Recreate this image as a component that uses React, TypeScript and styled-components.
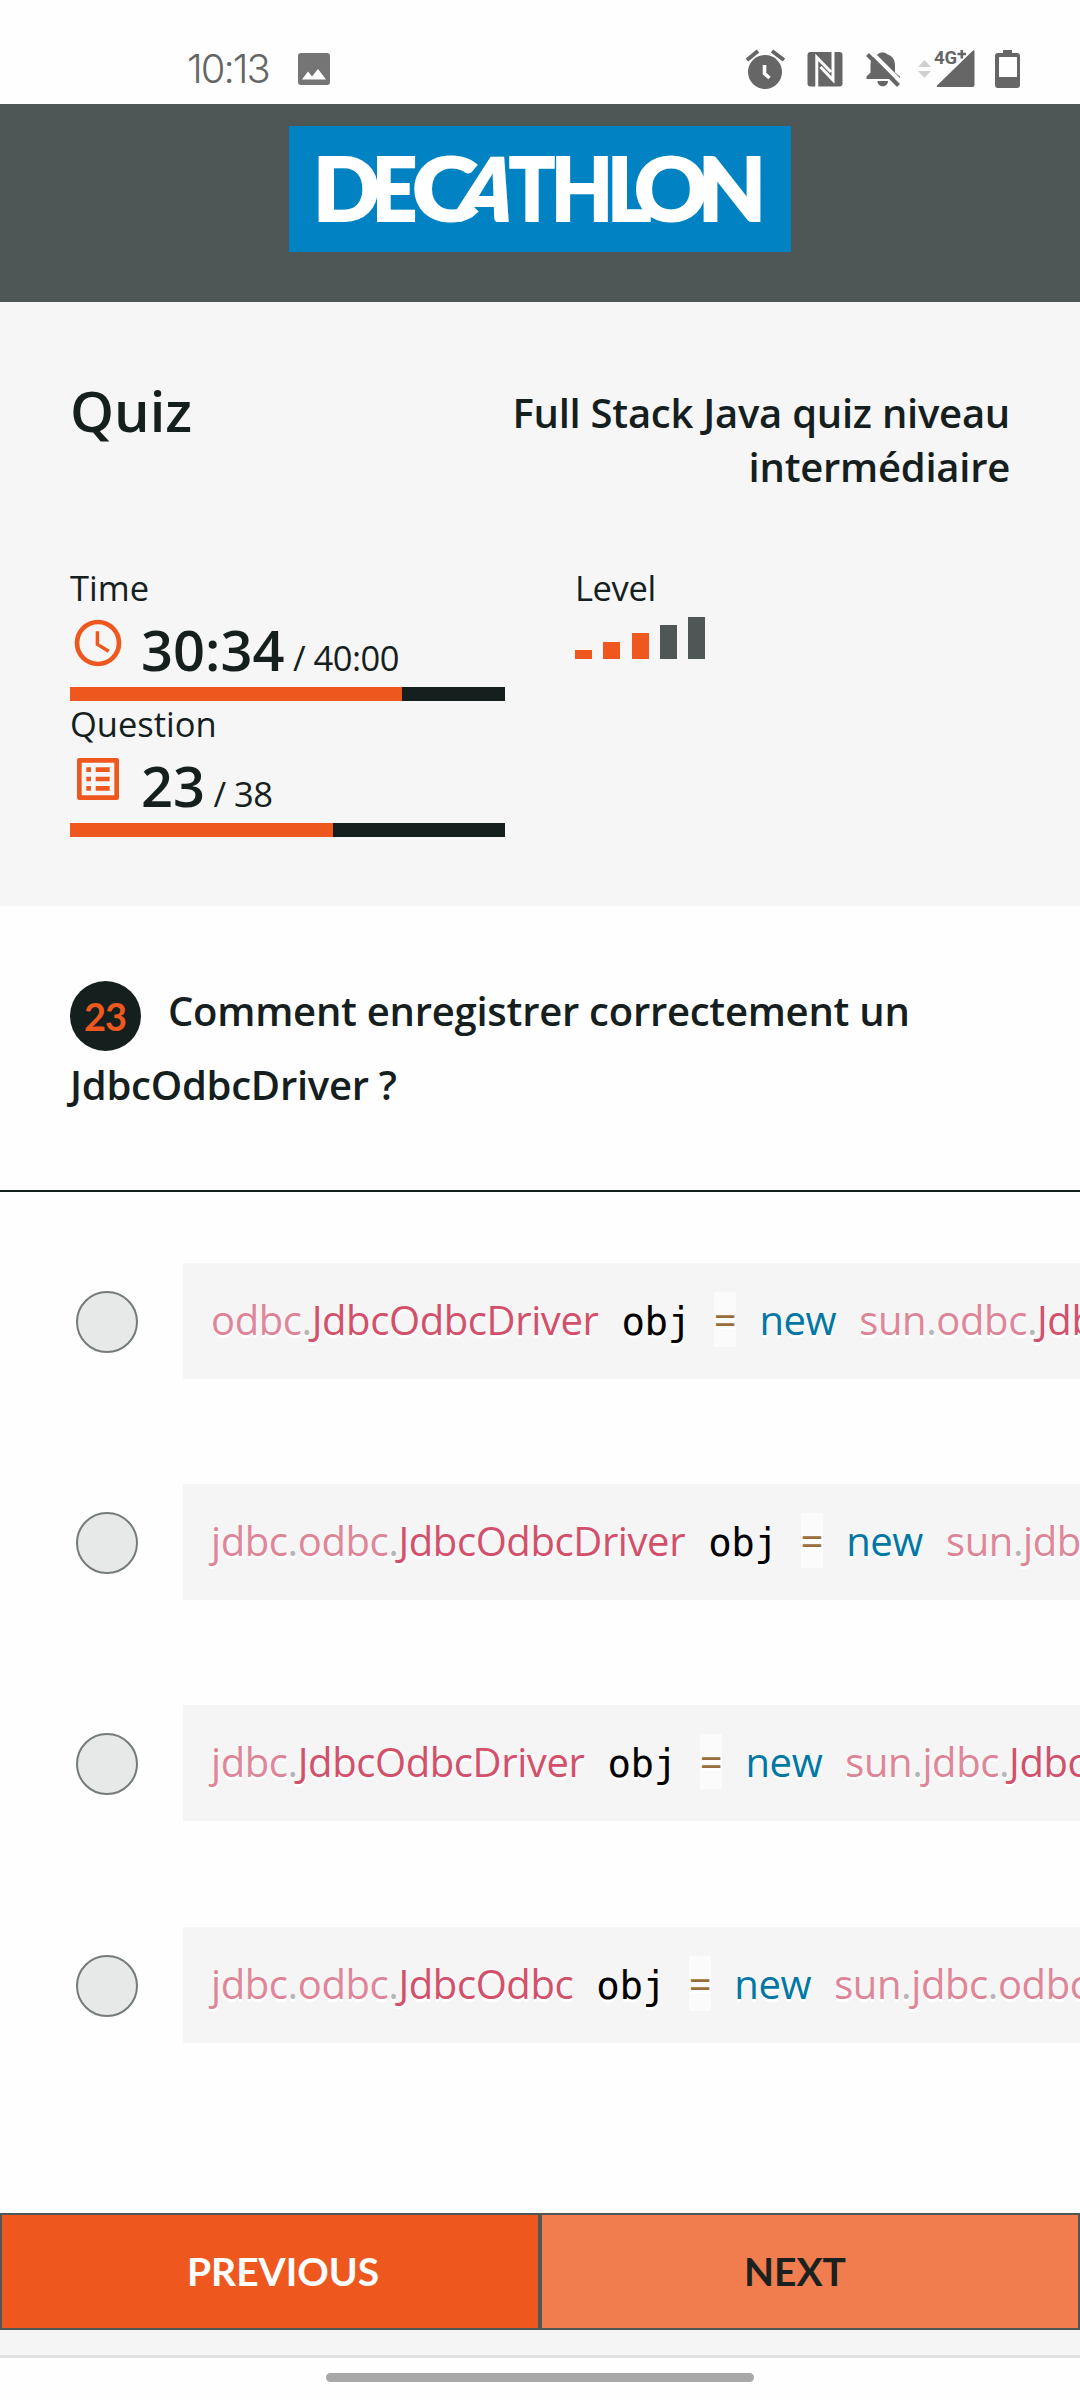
import React from "react";
import styled, { createGlobalStyle } from "styled-components";

const ink = "#15201e";
const slate = "#4e5755";
const orange = "#ee581f";
const statusGray = "#666666";

const GlobalStyle = createGlobalStyle`
  * { box-sizing: border-box; }
  body { margin: 0; background: #fff; }
`;

const Screen = styled.div`
  display: flex;
  flex-direction: column;
  width: 1080px;
  height: 2400px;
  overflow: hidden;
  background: #fefefe;
  color: ${ink};
  font-family: "Open Sans", "Noto Sans", sans-serif;
`;

const StatusBar = styled.div`
  display: flex;
  align-items: center;
  height: 104px;
  padding: 34px 60px 0 187px;
`;

const Clock = styled.span`
  width: 111px;
  font: 300 40px/48px Inter, "Liberation Sans", sans-serif;
  letter-spacing: -2px;
  color: ${statusGray};
`;

const StatusIcons = styled.div`
  display: flex;
  align-items: center;
  margin-left: auto;
`;

const StatusIcon = styled.svg<{ $gap?: number }>`
  display: block;
  overflow: visible;
  margin-left: ${(p) => p.$gap ?? 0}px;
`;

const Brand = styled.header`
  display: flex;
  justify-content: center;
  align-items: flex-start;
  height: 198px;
  padding-top: 22px;
  background: ${slate};
`;

const Summary = styled.section`
  height: 604px;
  padding: 84px 70px 0;
  background: #f6f6f6;
`;

const SummaryHead = styled.div`
  display: flex;
  justify-content: space-between;
  height: 181px;
`;

const Heading = styled.h1`
  margin: 0;
  font-size: 56px;
  font-weight: 600;
  line-height: 48px;
`;

const QuizName = styled.h2`
  width: 520px;
  margin: 0;
  font-size: 40px;
  font-weight: 600;
  line-height: 54px;
  letter-spacing: -0.25px;
  text-align: right;
`;

const Stats = styled.div`
  display: grid;
  grid-template-columns: 435px 435px;
  column-gap: 70px;
`;

const Stat = styled.div`
  height: 136px;
`;

const StatLabel = styled.div<{ $tight?: boolean }>`
  height: 48px;
  font-size: 34.5px;
  line-height: 41px;
  letter-spacing: ${(p) => (p.$tight ? -0.4 : 0)}px;
`;

const StatValue = styled.div`
  display: flex;
  height: 72px;
`;

const StatIcon = styled.svg`
  display: block;
  margin-right: 15px;
  fill: ${orange};
`;

const Figure = styled.div`
  display: flex;
  align-items: baseline;
  white-space: pre;
  line-height: 68px;
`;

const Current = styled.span`
  font-size: 56px;
  font-weight: 600;
`;

const Total = styled.span`
  font-size: 34.5px;
  letter-spacing: -0.5px;
`;

const Track = styled.div`
  height: 14px;
  background: ${ink};
`;

const Fill = styled.div`
  height: 14px;
  background: ${orange};
`;

const LevelBars = styled.div`
  display: flex;
  align-items: flex-end;
  gap: 11.3px;
  height: 44px;
`;

const LevelBar = styled.div<{ $on: boolean; $h: number }>`
  width: 17px;
  height: ${(p) => p.$h}px;
  background: ${(p) => (p.$on ? orange : slate)};
`;

const Question = styled.section`
  height: 286px;
  padding: 68px 70px 0;
  border-bottom: 2px solid ${ink};
`;

const Prompt = styled.p`
  margin: 0;
  font-size: 40px;
  font-weight: 600;
  line-height: 74px;
  letter-spacing: -0.25px;
`;

const Badge = styled.span`
  display: inline-flex;
  align-items: center;
  justify-content: center;
  width: 71px;
  height: 70px;
  margin: 0 27px -6px 0;
  padding-right: 1px;
  border-radius: 50%;
  vertical-align: -5px;
  background: ${ink};
  color: ${orange};
  font: 700 38px/70px Lato, sans-serif;
  letter-spacing: -1px;
`;

const Options = styled.ul`
  display: flex;
  flex-direction: column;
  gap: 105.2px;
  flex: 1;
  margin: 0;
  padding: 71px 0 0 76px;
  list-style: none;
`;

const Option = styled.li`
  display: flex;
  align-items: center;
  height: 116px;
`;

const Radio = styled.span`
  flex: none;
  width: 62px;
  height: 62px;
  margin: 2px 45px 0 0;
  border: 2px solid #747b79;
  border-radius: 50%;
  background: #e7e8e8;
`;

const Code = styled.code`
  flex: 1;
  height: 116px;
  padding: 0 28px;
  overflow: hidden;
  background: #f5f5f5;
  color: #000;
  font: 39px/114px "DejaVu Sans Mono", monospace;
  letter-spacing: -0.4px;
  text-shadow: 0 3px #fff;
  white-space: pre;
`;

const tokenColors = {
  ns: "rgba(211,80,107,.7)",
  dot: "rgba(153,153,153,.7)",
  cls: "#d3506b",
  op: "#9a6e3a",
  kw: "#0077a4",
};
type Kind = keyof typeof tokenColors;

const Token = styled.span<{ $kind: Kind }>`
  font-family: "Open Sans", "Noto Sans", sans-serif;
  font-size: 40px;
  color: ${(p) => tokenColors[p.$kind]};
  background: ${(p) => (p.$kind === "op" ? "rgba(255,255,255,.6)" : "none")};
`;

const Actions = styled.nav`
  display: grid;
  grid-template-columns: 1fr 1fr;
  height: 117px;
`;

const Action = styled.button<{ $muted?: boolean }>`
  padding: ${(p) => (p.$muted ? "0 30px 2px 0" : "0 0 2px 26px")};
  border: 2px solid ${slate};
  border-radius: 0;
  background: ${(p) => (p.$muted ? "#f17d4e" : orange)};
  color: ${(p) => (p.$muted ? "#1a211e" : "#fff")};
  font: 700 39px/48px Lato, sans-serif;
`;

const PageEdge = styled.div`
  height: 28px;
  border-bottom: 3px solid #e2e2e2;
  background: #f5f5f5;
`;

const GestureArea = styled.div`
  display: flex;
  justify-content: center;
  height: 42px;
  padding-top: 15px;
`;

const GesturePill = styled.div`
  width: 428px;
  height: 9px;
  border-radius: 5px;
  background: #a8a8a8;
`;

function Path({ path }: { path: string }) {
  return (
    <>
      {path.split(".").map((part, i) => (
        <React.Fragment key={i}>
          <Token $kind="ns">{part}</Token>
          <Token $kind="dot">.</Token>
        </React.Fragment>
      ))}
    </>
  );
}

const answers = [
  { pkg: "odbc", cls: "JdbcOdbcDriver", target: "sun.odbc" },
  { pkg: "jdbc.odbc", cls: "JdbcOdbcDriver", target: "sun.jdbc.odbc" },
  { pkg: "jdbc", cls: "JdbcOdbcDriver", target: "sun.jdbc" },
  { pkg: "jdbc.odbc", cls: "JdbcOdbc", target: "sun.jdbc.odbc" },
];

/* Letter, left edge, width and slant of each glyph of the wordmark. */
const wordmark: [string, number, number, number][] = [
  ["D", 314, 67, 0],
  ["E", 373, 45, 0],
  ["C", 413, 66, 0],
  ["A", 452, 56, -16],
  ["T", 510, 46, 0],
  ["H", 552, 62, 0],
  ["L", 608, 44, 0],
  ["O", 635, 74, 0],
  ["N", 699, 68, 0],
];

export default function App() {
  return (
    <Screen>
      <GlobalStyle />
      <StatusBar>
        <Clock>10:13</Clock>
        <StatusIcon width="32" height="32" viewBox="0 0 32 32">
          <path fill="#757575" fillRule="evenodd" d="M3 0h26q3 0 3 3v26q0 3-3 3H3q-3 0-3-3V3q0-3 3-3zM4 26.500h24l-8-10.500-6 7.500-4-5z" />
        </StatusIcon>
        <StatusIcons>
          <StatusIcon width="40" height="42" viewBox="745 48 40 42" fill="none" stroke={statusGray}>
            <circle cx="765" cy="72" r="17" fill={statusGray} stroke="none" />
            <path strokeWidth="4" d="M747 60l11-9M772 51l12 9" />
            <path stroke="#fff" strokeWidth="3.600" d="M764.500 65v8.500l5 4.500" />
          </StatusIcon>
          <StatusIcon $gap={22} width="36" height="36" viewBox="807 51 36 36" fill="none">
            <rect x="807.500" y="52" width="35" height="34.500" rx="3" fill={statusGray} />
            <path stroke="#fefefe" strokeWidth="3" strokeLinejoin="miter" d="M816.800 87V57.500L831 72M833 52V80L820.500 67" />
          </StatusIcon>
          <StatusIcon $gap={23} width="35" height="36" viewBox="866 51 35 36">
            <path fill={statusGray} d="M866.500 79v-2.500l4-4v-8c0-5 3-9 8-10.500 0-2 8-2 8 0 6 1.500 8.500 6 8.500 11v7.500l5 4v2.500zM877.500 81h10.500c0 7-10.500 7-10.500 0z" />
            <path stroke="#fefefe" strokeWidth="4" d="M870.500 51.500l31 31" />
            <path stroke={statusGray} strokeWidth="4" d="M867.500 54.500l31 31" />
          </StatusIcon>
          <StatusIcon $gap={17} width="57" height="40" viewBox="918 49 57 40">
            <path fill="#d0d0d0" d="M918 67l6.500-7 6.500 7zM918 71h13l-6.500 7z" />
            <path fill={statusGray} d="M973 50.500q1.500-1 1.500 1V85q0 2-2 2H938q-2 0-1-1.500z" />
            <path stroke="#fefefe" strokeWidth="3" d="M956 64.500l11-12.500" />
            <text x="934" y="64" fill={statusGray} fontFamily="Roboto, sans-serif" fontSize="18.500" fontWeight="700">4G</text>
            <path stroke={statusGray} strokeWidth="2.600" d="M957.500 54h8.500M961.800 50v8.500" />
          </StatusIcon>
          <StatusIcon $gap={20} width="25" height="38" viewBox="995 50 25 38">
            <path fill={statusGray} fillRule="evenodd" d="M1003 50h9v3h5q3 0 3 3v29q0 3-3 3h-19q-3 0-3-3V56q0-3 3-3h5zM999 57v20h18V57z" />
          </StatusIcon>
        </StatusIcons>
      </StatusBar>
      <Brand>
        <svg width="502" height="126" viewBox="290 126 502 126">
          <rect x="290" y="126" width="502" height="126" fill="#0082c3" />
          <g
            fill="#fff"
            stroke="#fff"
            strokeWidth="2"
            fontFamily="Lato, sans-serif"
            fontWeight="900"
            fontSize="87"
          >
            {wordmark.map(([letter, x, width, slant]) => (
              <text
                key={letter}
                transform={`translate(${x} 220.500) skewX(${slant})`}
                textLength={width}
                lengthAdjust="spacingAndGlyphs"
              >
                {letter}
              </text>
            ))}
          </g>
        </svg>
      </Brand>
      <Summary>
        <SummaryHead>
          <Heading>Quiz</Heading>
          <QuizName>Full Stack Java quiz niveau intermédiaire</QuizName>
        </SummaryHead>
        <Stats>
          <Stat>
            <StatLabel>Time</StatLabel>
            <StatValue>
              <StatIcon width="56" height="56" viewBox="0 0 24 24">
                <path d="M12 2a10 10 0 1 0 0 20 10 10 0 0 0 0-20zm0 18a8 8 0 1 1 0-16 8 8 0 0 1 0 16zm.500-13H11v6l5.200 3.200.8-1.300-4.500-2.700z" />
              </StatIcon>
              <Figure>
                <Current>30:34</Current>
                <Total> / 40:00</Total>
              </Figure>
            </StatValue>
            <Track>
              <Fill style={{ width: 332 }} />
            </Track>
          </Stat>
          <div>
            <StatLabel $tight>Level</StatLabel>
            <LevelBars>
              {[9, 17, 26, 34, 42].map((h, i) => (
                <LevelBar key={h} $h={h} $on={i < 3} />
              ))}
            </LevelBars>
          </div>
          <Stat>
            <StatLabel>Question</StatLabel>
            <StatValue>
              <StatIcon width="56" height="56" viewBox="0 0 24 24">
                <path fillRule="evenodd" d="M3.900 3h16.200q.9 0 .9.900v16.200q0 .9-.9.900H3.900q-.9 0-.9-.9V3.900q0-.9.900-.9zM5 5v14h14V5zM7 7h2v2H7zm0 4h2v2H7zm0 4h2v2H7zm4-8h6v2h-6zm0 4h6v2h-6zm0 4h6v2h-6z" />
              </StatIcon>
              <Figure>
                <Current>23</Current>
                <Total> / 38</Total>
              </Figure>
            </StatValue>
            <Track>
              <Fill style={{ width: 263 }} />
            </Track>
          </Stat>
        </Stats>
      </Summary>
      <Question>
        <Prompt>
          <Badge>23</Badge>
          Comment enregistrer correctement un JdbcOdbcDriver ?
        </Prompt>
      </Question>
      <Options>
        {answers.map((a, i) => (
          <Option key={i}>
            <Radio />
            <Code>
              <Path path={a.pkg} />
              <Token $kind="cls">{a.cls}</Token>
              {" obj "}
              <Token $kind="op">=</Token> <Token $kind="kw">new</Token> <Path path={a.target} />
              <Token $kind="cls">{a.cls}</Token>
            </Code>
          </Option>
        ))}
      </Options>
      <Actions>
        <Action>PREVIOUS</Action>
        <Action $muted>NEXT</Action>
      </Actions>
      <PageEdge />
      <GestureArea>
        <GesturePill />
      </GestureArea>
    </Screen>
  );
}
